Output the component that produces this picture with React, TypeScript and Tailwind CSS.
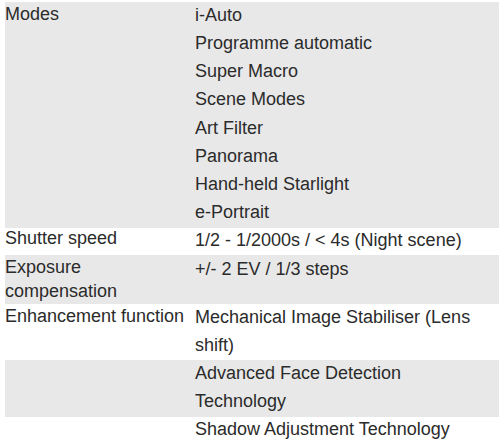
import React from "react";

type Row = {
  label: string[];
  values: string[];
  shaded: boolean;
  height: string;
  labelClass: string;
  valueClass: string;
};

// Spec rows, shaded ones alternate like the source table
const ROWS: Row[] = [
  {
    label: ["Modes"],
    values: [
      "i-Auto",
      "Programme automatic",
      "Super Macro",
      "Scene Modes",
      "Art Filter",
      "Panorama",
      "Hand-held Starlight",
      "e-Portrait",
    ],
    shaded: true,
    height: "h-[226px]",
    labelClass: "leading-[24px]",
    valueClass: "-mt-[1px] leading-[28.15px]",
  },
  {
    label: ["Shutter speed"],
    values: ["1/2 - 1/2000s / < 4s (Night scene)"],
    shaded: false,
    height: "h-[27px]",
    labelClass: "leading-[20px]",
    valueClass: "leading-[24px]",
  },
  {
    label: ["Exposure", "compensation"],
    values: ["+/- 2 EV / 1/3 steps"],
    shaded: true,
    height: "h-[49px]",
    labelClass: "leading-[24px]",
    valueClass: "leading-[28px]",
  },
  {
    label: ["Enhancement function"],
    values: ["Mechanical Image Stabiliser (Lens", "shift)"],
    shaded: false,
    height: "h-[56px]",
    labelClass: "leading-[24px]",
    valueClass: "-mt-px leading-[28px]",
  },
  {
    label: [""],
    values: ["Advanced Face Detection", "Technology"],
    shaded: true,
    height: "h-[57px]",
    labelClass: "leading-[24px]",
    valueClass: "-mt-px leading-[28px]",
  },
  {
    label: [""],
    values: ["Shadow Adjustment Technology"],
    shaded: false,
    height: "h-[29px]",
    labelClass: "leading-[24px]",
    valueClass: "-mt-[2px] leading-[28px]",
  },
];

export default function App() {
  return (
    <div className="min-h-[446px] w-[499px] overflow-hidden bg-white pl-[5px] pt-[2px] font-['Liberation_Sans',Arial,sans-serif] text-[18px] text-[#2b2b2b]">
      {ROWS.map((row, i) => (
        <div
          key={i}
          className={`flex ${row.height} ${row.shaded ? "bg-[#e8e8e8]" : "bg-white"}`}
        >
          <div className={`w-[190px] shrink-0 ${row.labelClass}`}>
            {row.label.map((l, j) => (
              <div key={j}>{l}</div>
            ))}
          </div>
          <div className={`flex-1 whitespace-nowrap ${row.valueClass}`}>
            {row.values.map((v, j) => (
              <div key={j}>{v}</div>
            ))}
          </div>
        </div>
      ))}
    </div>
  );
}
